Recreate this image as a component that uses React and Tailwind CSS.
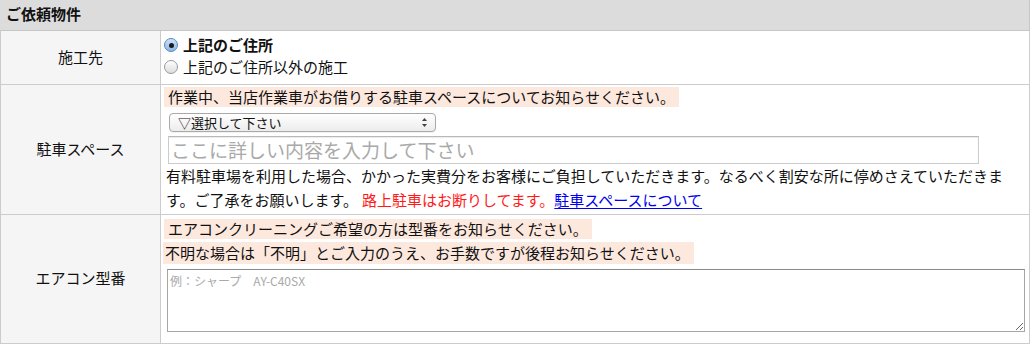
import { useState } from 'react'

function Radio({ checked }) {
  return (
    <span
      className={`inline-flex items-center justify-center w-[14px] h-[14px] rounded-full border shrink-0 ${
        checked
          ? 'border-[#5a8ac4] bg-gradient-to-b from-[#cfe3f7] to-[#8ab6e6]'
          : 'border-[#9a9a9a] bg-gradient-to-b from-[#ffffff] to-[#dcdcdc]'
      }`}
    >
      {checked && <span className="w-[5px] h-[5px] rounded-full bg-[#1a1a1a]" />}
    </span>
  )
}

export default function App() {
  const [site, setSite] = useState('same')

  return (
    <div
      className="w-[1030px] h-[345px] bg-white text-[#111] overflow-hidden"
      style={{ fontFamily: '"Noto Sans CJK JP", "Liberation Sans", sans-serif' }}
    >
      <div className="h-[31px] bg-[#dcdcdc] border-b border-[#c6c6c6] border-r border-r-[#c6c6c6] pl-[6px] flex items-center">
        <span className="text-[15px] font-bold leading-none -mt-[3px]">ご依頼物件</span>
      </div>

      <table className="w-full border-collapse text-[15px]">
        <tbody>
          {/* 施工先 */}
          <tr>
            <th className="w-[160px] h-[53px] bg-[#f5f5f5] border border-[#cccccc] border-t-0 font-normal text-center align-middle">
              施工先
            </th>
            <td className="border border-[#cccccc] border-t-0 pl-[3px] pt-[3px] pb-[5px] align-top">
              <label className="flex items-center gap-[5px] h-[22px] cursor-pointer" onClick={() => setSite('same')}>
                <Radio checked={site === 'same'} />
                <span className="font-bold leading-[22px]">上記のご住所</span>
              </label>
              <label className="flex items-center gap-[5px] h-[22px] cursor-pointer" onClick={() => setSite('other')}>
                <Radio checked={site === 'other'} />
                <span className="leading-[22px]">上記のご住所以外の施工</span>
              </label>
            </td>
          </tr>

          {/* 駐車スペース */}
          <tr>
            <th className="h-[130px] bg-[#f5f5f5] border border-[#cccccc] font-normal text-center align-middle">
              駐車スペース
            </th>
            <td className="border border-[#cccccc] pl-[3px] pr-[10px] pt-[2px] pb-0 align-top">
              <div className="w-fit bg-[#fde8de] h-[20px] leading-[20px] px-[4px]">
                作業中、当店作業車がお借りする駐車スペースについてお知らせください。
              </div>
              <div className="mt-[6px] ml-[5px] w-[267px] h-[19px] rounded-[4px] border border-[#a9a9a9] bg-gradient-to-b from-[#ffffff] to-[#ececec] flex items-center justify-between pl-[8px] pr-[7px] shadow-[0_1px_0_rgba(0,0,0,0.05)]">
                <span className="text-[13px] leading-none">▽選択して下さい</span>
                <svg width="7" height="11" viewBox="0 0 7 11">
                  <path d="M3.5 1 L6 4 H1 Z" fill="#444" />
                  <path d="M3.5 10 L6 7 H1 Z" fill="#444" />
                </svg>
              </div>
              <div className="mt-[4px] ml-[4px] w-[811px] h-[28px] border border-[#cccccc] border-t-[#b8b8b8] shadow-[inset_0_1px_1px_rgba(0,0,0,0.08)] flex items-center pl-[2px]">
                <span className="text-[19px] leading-none text-[#a9a9a9]">ここに詳しい内容を入力して下さい</span>
              </div>
              <div className="leading-[24px] pl-[2px]">
                <div className="whitespace-nowrap">
                  有料駐車場を利用した場合、かかった実費分をお客様にご負担していただきます。なるべく割安な所に停めさえていただきま
                </div>
                <div className="flex whitespace-nowrap">
                  <span>す。ご了承をお願いします。</span>
                  <span className="text-[#ff1a1a] ml-[4px]">路上駐車はお断りしてます。</span>
                  <a href="#" className="text-[#0000ee] underline underline-offset-[2px]">駐車スペースについて</a>
                </div>
              </div>
            </td>
          </tr>

          {/* エアコン型番 */}
          <tr>
            <th className="h-[129px] bg-[#f5f5f5] border border-[#cccccc] font-normal text-center align-middle">
              エアコン型番
            </th>
            <td className="border border-[#cccccc] pl-[2px] pt-[4px] pb-[11px] align-top">
              <div className="w-fit bg-[#fde8de] h-[20px] leading-[20px] px-[4px] ml-[1px]">
                エアコンクリーニングご希望の方は型番をお知らせください。
              </div>
              <div className="w-fit bg-[#fde8de] h-[22px] leading-[22px] pl-[2px] pr-[4px] mt-[3px]">
                不明な場合は「不明」とご入力のうえ、お手数ですが後程お知らせください。
              </div>
              <textarea
                placeholder="例：シャープ　AY-C40SX"
                className="block mt-[5px] ml-[4px] w-[858px] h-[63px] border border-[#a6a6a6] border-t-[#8a8a8a] text-[12px] leading-[16px] px-[2px] py-[3px] placeholder:text-[#a9a9a9] outline-none"
              />
            </td>
          </tr>
        </tbody>
      </table>
    </div>
  )
}
